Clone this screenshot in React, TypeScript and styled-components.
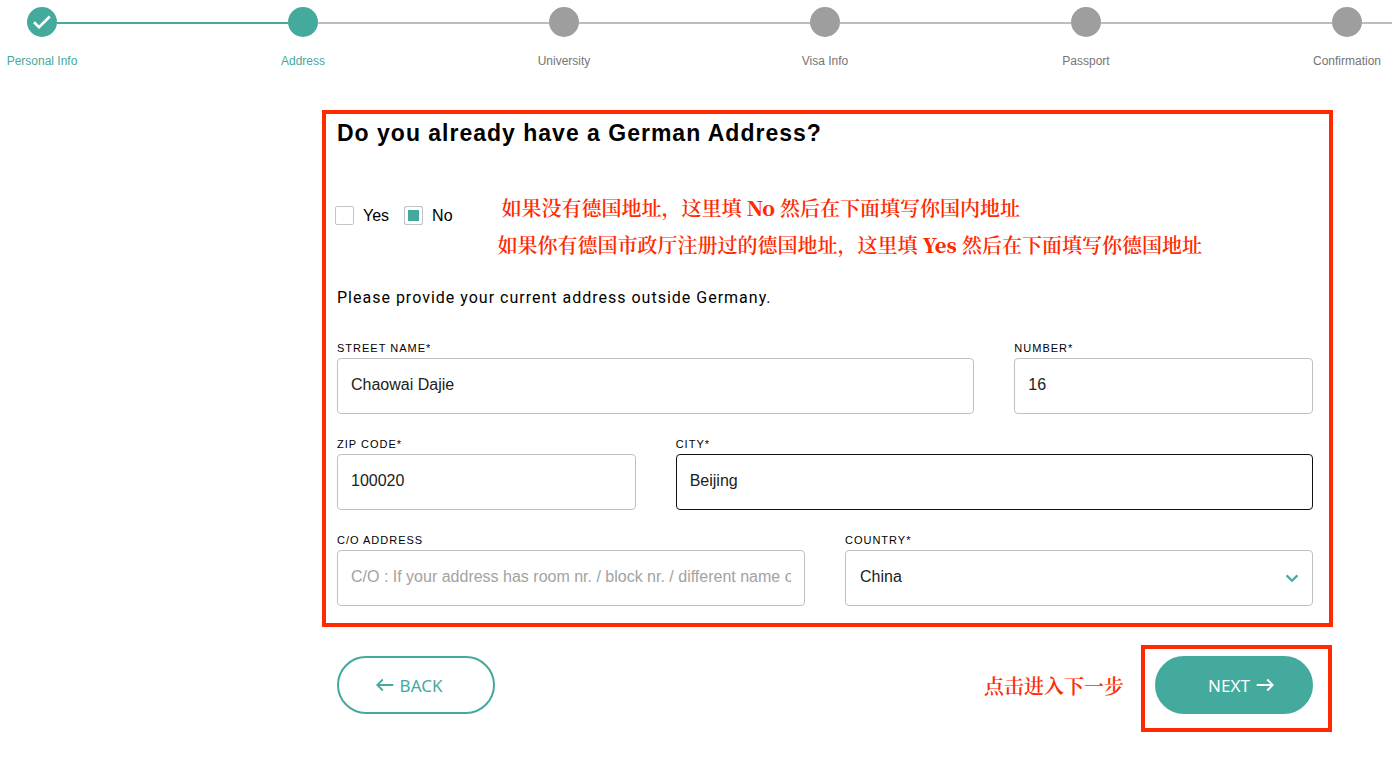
import React, { useState } from "react";
import styled, { createGlobalStyle } from "styled-components";

const teal = "#43aa9d";
const red = "#ff2a00";
const sans = '"Liberation Sans", Arial, sans-serif';

const GlobalStyle = createGlobalStyle`
  *, *::before, *::after { box-sizing: border-box; }
  body {
    margin: 0;
    background: #fff;
    color: #000;
    font-family: ${sans};
    font-size: 16px;
  }
  h1, p, ol, fieldset { margin: 0; padding: 0; border: 0; }
  input, select, button { font-family: inherit; }
`;

const Stepper = styled.ol`
  display: grid;
  grid-template-columns: repeat(5, 1fr) 60px;
  padding: 7px 0 0 27px;
  list-style: none;
`;

const Step = styled.li`
  display: flex;
  align-items: flex-start;
  min-width: 0;
`;

const Marker = styled.div`
  display: flex;
  flex: none;
  flex-direction: column;
  align-items: center;
  gap: 14px;
  width: 30px;
`;

const Dot = styled.span<{ $active: boolean }>`
  display: flex;
  align-items: center;
  justify-content: center;
  width: 30px;
  height: 30px;
  border-radius: 50%;
  background: ${(p) => (p.$active ? teal : "#9e9e9e")};
`;

const StepLabel = styled.span<{ $active: boolean }>`
  color: ${(p) => (p.$active ? teal : "#757575")};
  font-size: 12px;
  line-height: 20px;
  white-space: nowrap;
`;

const Connector = styled.span<{ $done: boolean }>`
  flex: 1;
  height: 2px;
  margin-top: 15px;
  background: ${(p) => (p.$done ? teal : "#bdbdbd")};
`;

const Form = styled.form`
  padding: 39px 59px 29px 322px;
`;

const Highlight = styled.section`
  padding: 3px 16px 17px 11px;
  border: 4px solid ${red};
`;

const Title = styled.h1`
  font-size: 23px;
  font-weight: 700;
  line-height: 32px;
  letter-spacing: 1px;
`;

const Question = styled.div`
  display: flex;
  gap: 45px;
  margin-top: 40px;
`;

const Choices = styled.fieldset`
  display: flex;
  flex: none;
  gap: 15px;
  height: 20px;
  margin: 17px 0 0 -2px;
`;

const Choice = styled.label`
  display: flex;
  align-items: flex-start;
  gap: 9px;
  line-height: 20px;
`;

const Tick = styled.input`
  appearance: none;
  width: 19px;
  height: 19px;
  margin: 0;
  border: 1px solid #c4c4c4;
  border-radius: 2px;
  background: #fff;

  &:checked {
    background: ${teal};
    box-shadow: inset 0 0 0 3px #fff;
  }
`;

const Note = styled.p<{ $indent?: boolean }>`
  padding-left: ${(p) => (p.$indent ? 4 : 0)}px;
  color: ${red};
  font-family: "Noto Serif CJK SC", "Noto Sans CJK SC", serif;
  font-size: 20px;
  font-weight: 600;
  line-height: 37px;
`;

const Intro = styled.p`
  margin-top: 23px;
  font-family: Roboto, "Liberation Sans", sans-serif;
  line-height: 24px;
  letter-spacing: 1px;
`;

const Fields = styled.div`
  display: grid;
  grid-template-columns: repeat(6, 1fr);
  gap: 22px 40px;
  margin-top: 30px;
`;

const Field = styled.div<{ $span: number }>`
  display: flex;
  grid-column: span ${(p) => p.$span};
  flex-direction: column;
  gap: 2px;
  min-width: 0;
`;

const FieldLabel = styled.label`
  font-size: 11px;
  line-height: 16px;
  letter-spacing: 1px;
  text-transform: uppercase;
`;

const TextBox = styled.input<{ $current?: boolean }>`
  width: 100%;
  height: 56px;
  padding: 0 13px 2px;
  border: 1px solid ${(p) => (p.$current ? "#111" : "#c0c0c0")};
  border-radius: 4px;
  background: #fff;
  color: #212121;
  font-size: 16px;
  outline: none;

  &::placeholder {
    color: #a2a2a2;
    opacity: 1;
  }
`;

const SelectWrap = styled.div`
  position: relative;

  svg {
    position: absolute;
    top: 24px;
    right: 14px;
    pointer-events: none;
  }
`;

const Select = styled.select`
  display: block;
  appearance: none;
  width: 100%;
  height: 56px;
  padding: 0 40px 4px 14px;
  border: 1px solid #c0c0c0;
  border-radius: 4px;
  background: #fff;
  color: #212121;
  font-size: 16px;
`;

const Actions = styled.div`
  display: flex;
  align-items: flex-start;
  justify-content: space-between;
  margin-top: 18px;
  padding: 0 1px 0 15px;
`;

const NextGroup = styled.div`
  display: flex;
  align-items: flex-start;
  gap: 17px;

  ${Note} {
    margin-top: 22px;
  }
`;

const NextHighlight = styled.div`
  padding: 7px 15px 14px 10px;
  border: 4px solid ${red};
`;

const PillButton = styled.button<{ $filled?: boolean }>`
  display: flex;
  align-items: center;
  justify-content: center;
  gap: 6px;
  width: 158px;
  height: 58px;
  padding: ${(p) => (p.$filled ? "0 0 0 14px" : "0 14px 0 0")};
  border: 2px solid ${teal};
  border-radius: 29px;
  background: ${(p) => (p.$filled ? teal : "#fff")};
  color: ${(p) => (p.$filled ? "#fff" : teal)};
  font-family: "Noto Sans", sans-serif;
  font-size: 17px;
  line-height: 24px;
  cursor: pointer;
`;

const PillText = styled.span`
  padding-top: 2px;
`;

const BackSlot = styled.div`
  padding-top: 11px;
`;

const steps = ["Personal Info", "Address", "University", "Visa Info", "Passport", "Confirmation"];
const current = 1;

const CheckIcon = () => (
  <svg width="18" height="14" viewBox="0 0 18 14" fill="none" aria-hidden="true">
    <path d="M1 7.3 6 12.2 16.8 1.5" stroke="#fff" strokeWidth="2.6" />
  </svg>
);

const ChevronIcon = () => (
  <svg width="14" height="9" viewBox="0 0 14 9" fill="none" aria-hidden="true">
    <path d="M1.6 1.4 7 6.8l5.4-5.4" stroke={teal} strokeWidth="2.2" />
  </svg>
);

const ArrowIcon = ({ left = false }: { left?: boolean }) => (
  <svg width="18" height="14" viewBox="0 0 18 14" fill="none" aria-hidden="true">
    <path
      d={left ? "M17.3 7H1.2M6.8 1.5 1.2 7l5.6 5.5" : "M.7 7h16.1M11.2 1.5 16.8 7l-5.6 5.5"}
      stroke="currentColor"
      strokeWidth="1.8"
    />
  </svg>
);

export default function App() {
  const [hasAddress, setHasAddress] = useState(false);

  return (
    <>
      <GlobalStyle />
      <Stepper>
        {steps.map((label, i) => (
          <Step key={label} aria-current={i === current ? "step" : undefined}>
            <Marker>
              <Dot $active={i <= current}>{i < current && <CheckIcon />}</Dot>
              <StepLabel $active={i <= current}>{label}</StepLabel>
            </Marker>
            <Connector $done={i < current} />
          </Step>
        ))}
      </Stepper>

      <Form onSubmit={(e) => e.preventDefault()}>
        <Highlight>
          <Title>Do you already have a German Address?</Title>
          <Question>
            <Choices>
              <Choice>
                <Tick type="checkbox" checked={hasAddress} onChange={() => setHasAddress(true)} />
                Yes
              </Choice>
              <Choice>
                <Tick type="checkbox" checked={!hasAddress} onChange={() => setHasAddress(false)} />
                No
              </Choice>
            </Choices>
            <div lang="zh-CN">
              <Note $indent>
                如果没有德国地址，这里填 <b>No</b> 然后在下面填写你国内地址
              </Note>
              <Note>
                如果你有德国市政厅注册过的德国地址，这里填 <b>Yes</b> 然后在下面填写你德国地址
              </Note>
            </div>
          </Question>
          <Intro>Please provide your current address outside Germany.</Intro>

          <Fields>
            <Field $span={4}>
              <FieldLabel htmlFor="street">Street name*</FieldLabel>
              <TextBox id="street" defaultValue="Chaowai Dajie" />
            </Field>
            <Field $span={2}>
              <FieldLabel htmlFor="number">Number*</FieldLabel>
              <TextBox id="number" defaultValue="16" />
            </Field>
            <Field $span={2}>
              <FieldLabel htmlFor="zip">Zip code*</FieldLabel>
              <TextBox id="zip" defaultValue="100020" />
            </Field>
            <Field $span={4}>
              <FieldLabel htmlFor="city">City*</FieldLabel>
              <TextBox id="city" defaultValue="Beijing" $current />
            </Field>
            <Field $span={3}>
              <FieldLabel htmlFor="care-of">C/O Address</FieldLabel>
              <TextBox
                id="care-of"
                placeholder="C/O : If your address has room nr. / block nr. / different name on the door"
              />
            </Field>
            <Field $span={3}>
              <FieldLabel htmlFor="country">Country*</FieldLabel>
              <SelectWrap>
                <Select id="country" defaultValue="China">
                  <option>China</option>
                </Select>
                <ChevronIcon />
              </SelectWrap>
            </Field>
          </Fields>
        </Highlight>

        <Actions>
          <BackSlot>
            <PillButton type="button">
              <ArrowIcon left />
              <PillText>BACK</PillText>
            </PillButton>
          </BackSlot>
          <NextGroup>
            <Note lang="zh-CN">点击进入下一步</Note>
            <NextHighlight>
              <PillButton type="submit" $filled>
                <PillText>NEXT</PillText>
                <ArrowIcon />
              </PillButton>
            </NextHighlight>
          </NextGroup>
        </Actions>
      </Form>
    </>
  );
}
